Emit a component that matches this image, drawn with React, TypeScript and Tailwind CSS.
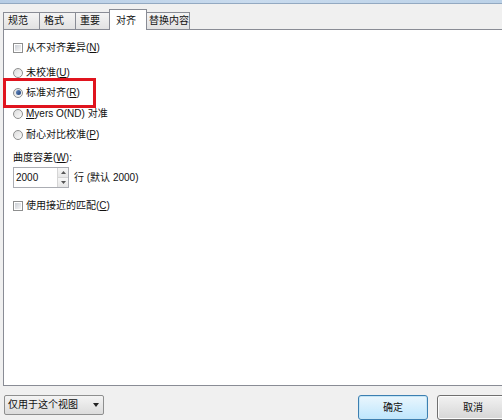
import React from 'react';

const Radio = ({ checked = false }: { checked?: boolean }) => (
  <span className="relative flex h-[10px] w-[10px] shrink-0 items-center justify-center rounded-full border border-[#8e8f8f] bg-gradient-to-br from-[#dcdcdc] to-[#fbfbfb]">
    {checked && <span className="h-[5px] w-[5px] rounded-full bg-gradient-to-br from-[#6b8fc4] to-[#1c3f7a]" />}
  </span>
);

const Check = () => (
  <span className="flex h-[10px] w-[10px] shrink-0 items-center justify-center border border-[#8e8f8f] bg-white">
    <span className="h-[6px] w-[6px] bg-gradient-to-br from-[#cbcfd5] to-[#f6f6f6]" />
  </span>
);

const Row = ({ children, className = '' }: { children: React.ReactNode; className?: string }) => (
  <div className={`flex h-[14px] items-center gap-[3px] pl-[9px] ${className}`}>{children}</div>
);

export default function App() {
  const tabs = [
    { label: '规范', w: 'w-[37px]' },
    { label: '格式', w: 'w-[37px]' },
    { label: '重要', w: 'w-[35px]' },
  ];

  return (
    <div className="relative flex h-[420px] w-[502px] flex-col overflow-hidden bg-[#f0f0f0] font-['Liberation_Sans','Noto_Sans_CJK_SC',sans-serif] text-[10px] text-[#111]">
      {/* window title remnant */}
      <div className="h-[3px] bg-gradient-to-r from-[#b7cde5] via-[#c9dbee] to-[#bcd2e8]" />
      <div className="h-px bg-[#93a9c1]" />

      {/* tab strip */}
      <div className="mt-[5px] flex h-[20px] items-end whitespace-nowrap pl-[3px]">
        {tabs.map((t) => (
          <div
            key={t.label}
            className={`${t.w} -mr-px flex h-[17px] items-center border border-b-0 border-[#898c95] bg-gradient-to-b from-[#f4f4f4] to-[#e2e2e2] pl-[4px]`}
          >
            {t.label}
          </div>
        ))}
        <div className="relative z-10 -mb-px flex h-[21px] w-[38px] items-start border border-b-0 border-[#898c95] bg-white pl-[6px] pt-[3px]">
          对齐
        </div>
        <div className="-ml-px flex h-[17px] w-[44px] shrink-0 items-center border border-b-0 border-[#898c95] bg-gradient-to-b from-[#f4f4f4] to-[#e2e2e2] pl-[2px]">
          替换内容
        </div>
      </div>

      {/* content panel */}
      <div className="relative ml-[3px] -mr-[4px] flex h-[360px] flex-col border border-[#898c95] bg-white">
        <Row className="mt-[11px]">
          <Check />
          <span>
            从不对齐差异(<u>N</u>)
          </span>
        </Row>
        <Row className="mt-[11px]">
          <Radio />
          <span>
            未校准(<u>U</u>)
          </span>
        </Row>
        <Row className="mt-[6px]">
          <Radio checked />
          <span>
            标准对齐(<u>R</u>)
          </span>
        </Row>
        <Row className="mt-[7px]">
          <Radio />
          <span>
            <u>M</u>yers O(ND) 对准
          </span>
        </Row>
        <Row className="mt-[7px]">
          <Radio />
          <span>
            耐心对比校准(<u>P</u>)
          </span>
        </Row>
        <div className="mt-[9px] flex h-[14px] items-center pl-[9px]">
          曲度容差(<u>W</u>):
        </div>
        <div className="mt-[2px] flex h-[21px] items-center pl-[9px]">
          <div className="flex h-[21px] w-[56px] border border-[#abadb3] bg-white">
            <span className="flex flex-1 items-center pl-[2px]">2000</span>
            <div className="flex w-[11px] flex-col border-l border-[#d5d5d5]">
              <span className="flex flex-1 items-center justify-center border-b border-[#d5d5d5] bg-gradient-to-b from-[#f7f7f7] to-[#e6e6e6]">
                <svg width="5" height="3" viewBox="0 0 5 3"><path d="M0 3L2.5 0L5 3Z" fill="#555" /></svg>
              </span>
              <span className="flex flex-1 items-center justify-center bg-gradient-to-b from-[#f7f7f7] to-[#e6e6e6]">
                <svg width="5" height="3" viewBox="0 0 5 3"><path d="M0 0L2.5 3L5 0Z" fill="#555" /></svg>
              </span>
            </div>
          </div>
          <span className="ml-[5px]">行 (默认 2000)</span>
        </div>
        <Row className="mt-[11px]">
          <Check />
          <span>
            使用接近的匹配(<u>C</u>)
          </span>
        </Row>

        {/* red annotation box */}
        <div className="absolute left-[-1px] top-[48px] h-[30px] w-[93px] border-[3px] border-[#e0141e]" />
      </div>

      {/* bottom bar */}
      <div className="mt-[9px] flex items-start pl-[4px]">
        <div className="flex h-[20px] w-[100px] shrink-0 items-center justify-between rounded-[2px] border border-[#8e8f8f] bg-gradient-to-b from-[#f4f4f4] to-[#dcdcdc] pl-[3px] pr-[4px]">
          <span>仅用于这个视图</span>
          <svg width="6" height="4" viewBox="0 0 6 4"><path d="M0 0L3 4L6 0Z" fill="#222" /></svg>
        </div>
        <button className="ml-[254px] flex h-[25px] w-[70px] shrink-0 items-center justify-center rounded-[3px] border border-[#3c7fb1] bg-gradient-to-b from-[#eaf6fd] to-[#bee6fd] shadow-[inset_0_0_0_1px_#c4e5f6]">
          确定
        </button>
        <button className="ml-[9px] flex h-[25px] w-[72px] shrink-0 items-center justify-center rounded-[3px] border border-[#707070] bg-gradient-to-b from-[#f2f2f2] to-[#d6d6d6] shadow-[inset_0_0_0_1px_#fcfcfc]">
          取消
        </button>
      </div>
    </div>
  );
}
